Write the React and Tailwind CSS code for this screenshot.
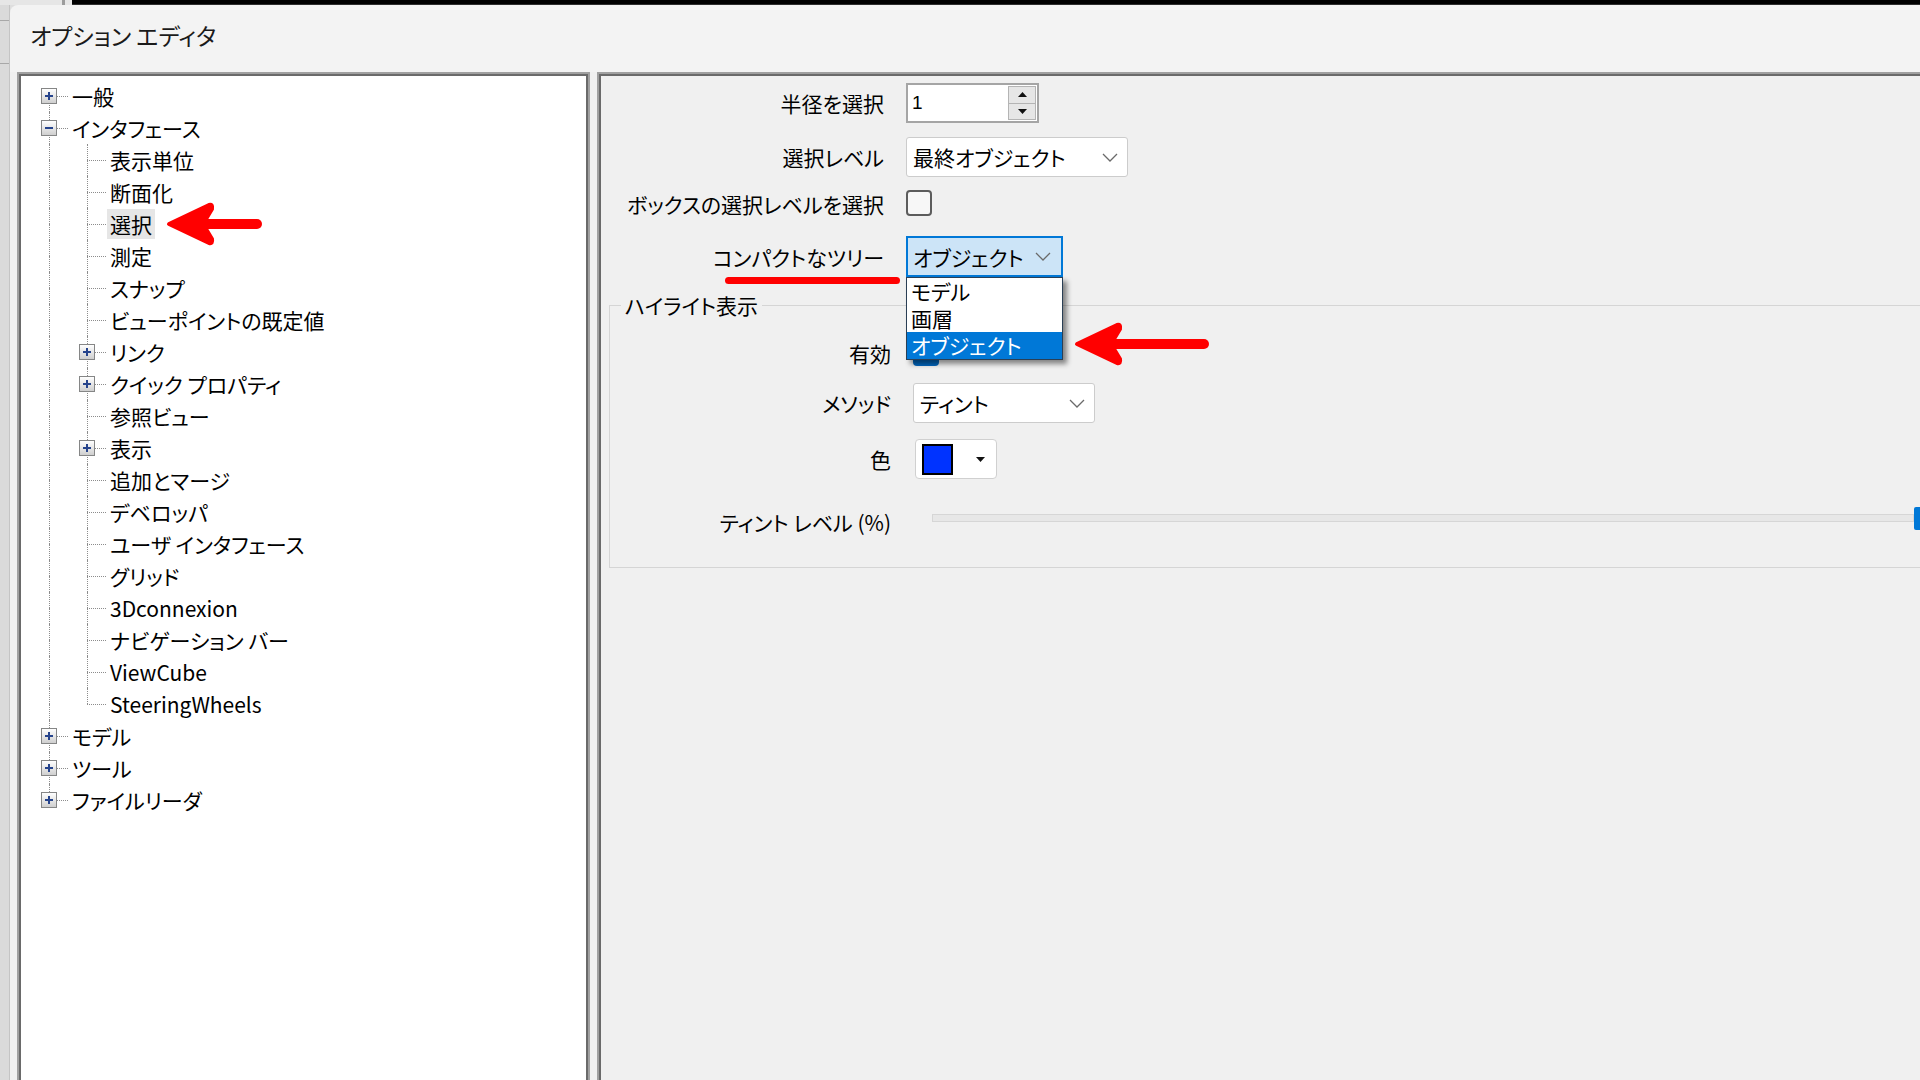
const font = "font-['Noto_Sans_CJK_JP',sans-serif] [font-feature-settings:'palt']";

const treeItems = [
  { label: "一般", level: 0, box: "plus", first: true },
  { label: "インタフェース", level: 0, box: "minus" },
  { label: "表示単位", level: 1 },
  { label: "断面化", level: 1 },
  { label: "選択", level: 1, selected: true, arrow: true },
  { label: "測定", level: 1 },
  { label: "スナップ", level: 1 },
  { label: "ビューポイントの既定値", level: 1 },
  { label: "リンク", level: 1, box: "plus" },
  { label: "クイック プロパティ", level: 1, box: "plus" },
  { label: "参照ビュー", level: 1 },
  { label: "表示", level: 1, box: "plus" },
  { label: "追加とマージ", level: 1 },
  { label: "デベロッパ", level: 1 },
  { label: "ユーザ インタフェース", level: 1 },
  { label: "グリッド", level: 1 },
  { label: "3Dconnexion", level: 1 },
  { label: "ナビゲーション バー", level: 1 },
  { label: "ViewCube", level: 1 },
  { label: "SteeringWheels", level: 1, last: true },
  { label: "モデル", level: 0, box: "plus" },
  { label: "ツール", level: 0, box: "plus" },
  { label: "ファイルリーダ", level: 0, box: "plus", last: true },
];

function RedArrow({ width }) {
  return (
    <svg width={width} height="48" viewBox={`0 0 ${width} 48`} className="block">
      <path d={`M30 24 H${width - 6}`} stroke="#ff0000" strokeWidth="10" strokeLinecap="round" />
      <path
        d="M4 24 L44 5 Q48 4 47 9 L38 24 L47 39 Q48 44 44 43 Z"
        fill="#ff0000"
        stroke="#ff0000"
        strokeWidth="4"
        strokeLinejoin="round"
      />
    </svg>
  );
}

function Expander({ kind }) {
  return (
    <div className="absolute left-[11px] top-[8px] w-[16px] h-[16px] border border-[#858686] bg-linear-to-b from-white to-[#cfcfcf] flex items-center justify-center">
      <svg width="10" height="10" viewBox="0 0 10 10">
        <path d="M1 5 H9" stroke="#26448c" strokeWidth="2" />
        {kind === "plus" && <path d="M5 1 V9" stroke="#26448c" strokeWidth="2" />}
      </svg>
    </div>
  );
}

function Cell({ top, bottom, stub, box }) {
  return (
    <div className="relative w-[38px] h-[32px] shrink-0">
      {top && <div className="absolute left-[19px] top-0 h-[16px] border-l border-dotted border-[#8c8c8c]" />}
      {bottom && <div className="absolute left-[19px] top-[16px] h-[16px] border-l border-dotted border-[#8c8c8c]" />}
      {stub && <div className="absolute left-[19px] right-0 top-[16px] border-t border-dotted border-[#8c8c8c]" />}
      {box && <Expander kind={box} />}
    </div>
  );
}

function TreeRow({ item }) {
  const cells = [];
  for (let k = 0; k <= item.level; k++) {
    if (k < item.level) {
      cells.push(<Cell key={k} top bottom />);
    } else {
      cells.push(
        <Cell key={k} top={!item.first} bottom={!item.last} stub box={item.box} />
      );
    }
  }
  return (
    <div className="flex items-center h-[32px]">
      {cells}
      <span
        className={`ml-[1px] px-[3px] h-[30px] flex items-center whitespace-nowrap ${
          item.selected ? "bg-[#e6e6e6]" : ""
        }`}
      >
        {item.label}
      </span>
      {item.arrow && (
        <div className="ml-[10px]">
          <RedArrow width={98} />
        </div>
      )}
    </div>
  );
}

function TreePanel() {
  return (
    <div className="ml-[7px] w-[573px] shrink-0 border-t-2 border-l-2 border-r-2 border-[#a0a0a0]">
      <div className="h-full border-t-2 border-l-2 border-r-2 border-[#6a6a6a] bg-white pt-[4px] pl-[9px]">
        {treeItems.map((item) => (
          <TreeRow key={item.label} item={item} />
        ))}
      </div>
    </div>
  );
}

function Chevron() {
  return (
    <svg width="16" height="9" viewBox="0 0 16 9" className="shrink-0">
      <polyline points="1,1 8,8 15,1" fill="none" stroke="#6a6a6a" strokeWidth="1.3" />
    </svg>
  );
}

function SmallTri({ down }) {
  return (
    <svg width="9" height="5" viewBox="0 0 9 5">
      <path d={down ? "M0 0 H9 L4.5 5 Z" : "M0 5 H9 L4.5 0 Z"} fill="#111" />
    </svg>
  );
}

function Select({ value, width }) {
  return (
    <div className={`${width} h-[40px] border border-[#cccccc] rounded-[3px] bg-white flex items-center pl-[6px] pr-[9px]`}>
      <span className="flex-1 whitespace-nowrap">{value}</span>
      <Chevron />
    </div>
  );
}

function Row({ label, labelWidth = "w-[283px]", className = "", children }) {
  return (
    <div className={`flex items-center h-[40px] ${className}`}>
      <div className={`${labelWidth} shrink-0 text-right whitespace-nowrap`}>{label}</div>
      <div className="ml-[22px] flex items-center">{children}</div>
    </div>
  );
}

function SettingsPanel() {
  return (
    <div className="ml-[7px] flex-1 min-w-0 border-t-2 border-l-2 border-[#a0a0a0]">
      <div className="h-full border-t-2 border-l-2 border-[#6a6a6a] overflow-hidden pt-[7px]">
        <Row label="半径を選択">
          <div className="w-[133px] h-[40px] border-2 border-[#a5a5a5] bg-white flex items-center">
            <span className="flex-1 pl-[4px] font-['Liberation_Sans',sans-serif] text-[19px]">1</span>
            <div className="w-[28px] h-[34px] mr-[1px] flex flex-col border border-[#b4b4b4] bg-[#e6e6e6]">
              <div className="flex-1 flex items-center justify-center border-b border-[#b4b4b4]">
                <SmallTri />
              </div>
              <div className="flex-1 flex items-center justify-center">
                <SmallTri down />
              </div>
            </div>
          </div>
        </Row>

        <Row className="mt-[14px]" label="選択レベル">
          <Select value="最終オブジェクト" width="w-[222px]" />
        </Row>

        <Row className="mt-[7px]" label="ボックスの選択レベルを選択">
          <div className="w-[26px] h-[26px] -mt-[3px] rounded-[4px] border-2 border-[#5c5c5c] bg-[#f7f7f7]" />
        </Row>

        <div className="relative flex items-center h-[41px] mt-[12px]">
          <div className="w-[283px] shrink-0 text-right whitespace-nowrap">コンパクトなツリー</div>
          <div className="ml-[22px] relative w-[157px] h-[41px] border-2 border-[#0078d7] bg-[#cce4f7] flex items-center pl-[5px] pr-[10px]">
            <span className="flex-1 whitespace-nowrap">オブジェクト</span>
            <Chevron />
            <div className="absolute left-[-2px] top-[39px] w-[157px] z-10 bg-white border border-[#2a3f55] shadow-[4px_4px_5px_rgba(0,0,0,0.45)]">
              <div className="h-[27px] leading-[27px] pl-[4px]">モデル</div>
              <div className="h-[27px] leading-[27px] pl-[4px]">画層</div>
              <div className="h-[27px] leading-[27px] pl-[4px] bg-[#0078d7] text-white">オブジェクト</div>
            </div>
          </div>
          <div className="absolute left-[124px] top-[41px] w-[175px] h-[7px] rounded-full bg-[#ff0000]" />
        </div>

        <fieldset className="ml-[8px] mt-[15px] w-[1340px] border border-[#d5d5d5]">
          <legend className="ml-[11px] px-[4px] leading-[26px]">ハイライト表示</legend>
          <div className="pt-[15px] pb-[25px]">
            <Row className="relative" labelWidth="w-[281px]" label="有効">
              <div className="w-[26px] h-[26px] rounded-[4px] bg-[#0067c0]" />
              <div className="absolute left-[463px] top-[-13px]">
                <RedArrow width={137} />
              </div>
            </Row>

            <Row className="mt-[10px]" labelWidth="w-[281px]" label="メソッド">
              <Select value="ティント" width="w-[182px]" />
            </Row>

            <Row className="mt-[16px]" labelWidth="w-[281px]" label="色">
              <div className="ml-[2px] w-[82px] h-[40px] rounded-[4px] border border-[#d0d0d0] bg-white flex items-center pl-[6px]">
                <div className="w-[31px] h-[31px] bg-[#0033ff] border-2 border-black" />
                <div className="ml-[23px]">
                  <SmallTri down />
                </div>
              </div>
            </Row>

            <div className="flex items-center h-[40px] mt-[23px]">
              <div className="w-[281px] shrink-0 text-right whitespace-nowrap">ティント レベル (%)</div>
              <div className="ml-[41px] w-[990px] h-[40px] flex items-center pb-[8px]">
                <div className="flex-1 h-[8px] border border-[#d6d6d6] bg-[#e7e7e7]" />
                <div className="w-[8px] h-[23px] bg-[#0078d7] rounded-[2px]" />
              </div>
            </div>
          </div>
        </fieldset>
      </div>
    </div>
  );
}

export default function App() {
  return (
    <div className={`w-[1920px] h-[1080px] overflow-hidden flex flex-col bg-[#dedede] text-black text-[21px] leading-[26px] ${font}`}>
      <div className="flex h-[5px] shrink-0">
        <div className="w-[62px] bg-[#e6e6e6]" />
        <div className="w-[3px] bg-[#9c9c9c]" />
        <div className="w-[7px] bg-[#e6e6e6]" />
        <div className="flex-1 bg-black border-b border-[#2e2e2e]" />
      </div>
      <div className="flex flex-1 min-h-0">
        <div className="w-[10px] shrink-0 bg-[#dadada] border-r border-[#c4c4c4] flex flex-col">
          <div className="h-[15px]" />
          <div className="h-px bg-[#a8a8a8]" />
          <div className="h-[42px]" />
          <div className="h-px bg-[#a8a8a8]" />
        </div>
        <div className="flex-1 min-w-0 flex flex-col bg-[#f3f3f3] rounded-tl-[8px]">
          <div className="h-[67px] shrink-0 flex items-center pl-[20px] pb-[8px] text-[23px] text-[#1a1a1a]">
            オプション エディタ
          </div>
          <div className="flex flex-1 min-h-0 bg-[#f0f0f0]">
            <TreePanel />
            <SettingsPanel />
          </div>
        </div>
      </div>
    </div>
  );
}
